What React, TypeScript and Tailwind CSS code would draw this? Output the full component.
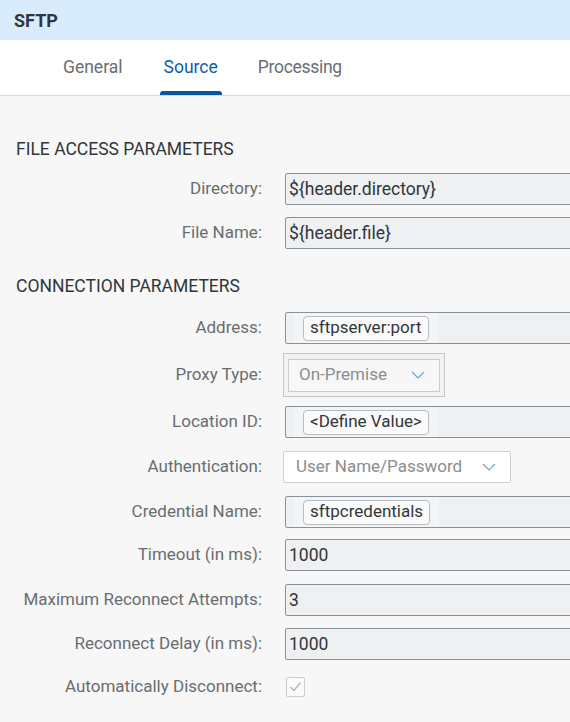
import React from "react";

const font = { fontFamily: "Roboto, 'Liberation Sans', Arial, sans-serif" };

function Chevron() {
  return (
    <svg width="14" height="8" viewBox="0 0 14 8" className="shrink-0">
      <path d="M1 1 L7 7 L13 1" fill="none" stroke="#6a9fd6" strokeWidth="1.1" />
    </svg>
  );
}

function Label({ children }: { children: React.ReactNode }) {
  return <div className="w-[262px] shrink-0 text-right text-[17px] text-[#6a6d70]">{children}</div>;
}

function TextInput({ value }: { value: string }) {
  return (
    <div className="ml-[23px] flex h-[32px] w-[320px] shrink-0 items-center rounded-l-[2px] border border-[#89919a] bg-[#eef0f1] pl-[3px] text-[17.5px] text-[#32363a]">
      {value}
    </div>
  );
}

function TokenInput({ value }: { value: string }) {
  return (
    <div className="ml-[23px] flex h-[32px] w-[320px] shrink-0 items-stretch rounded-l-[2px] border border-[#89919a] bg-[#eef0f1]">
      <div className="ml-[8px] flex items-center bg-[#f3f4f5] px-[9px]">
        <span className="flex h-[25px] items-center rounded-[4px] border border-[#b8bcc0] bg-[#fafafa] px-[6px] text-[17px] text-[#32363a]">
          {value}
        </span>
      </div>
    </div>
  );
}

function Row({ label, children, className }: { label: string; children: React.ReactNode; className?: string }) {
  return (
    <div className={"flex items-center " + (className ?? "")}>
      <Label>{label}</Label>
      {children}
    </div>
  );
}

export default function App() {
  return (
    <div className="h-[722px] w-[570px] overflow-hidden bg-[#f7f7f7]" style={font}>
      {/* Header */}
      <div className="flex h-[40px] items-center bg-[#d9ecfd] pl-[14px] text-[18px] font-bold text-[#32363a]">
        SFTP
      </div>

      {/* Tabs */}
      <div className="flex h-[56px] items-stretch border-b border-[#d9d9d9] bg-white pl-[59px]">
        <div className="flex items-center px-[4px] text-[17.5px] text-[#6a6d70]">General</div>
        <div className="relative ml-[33px] flex items-center px-[4px] text-[17.5px] text-[#0a5eb0]">
          Source
          <div className="absolute bottom-0 left-0 right-0 h-[4px] rounded-t-[3px] bg-[#0854a0]" />
        </div>
        <div className="ml-[32px] flex items-center px-[4px] text-[17.5px] tracking-[-0.3px] text-[#6a6d70]">
          Processing
        </div>
      </div>

      {/* Content */}
      <div className="pt-[41px]">
        <div className="pl-[16px] text-[17.5px] leading-6 text-[#32363a]">FILE ACCESS PARAMETERS</div>
        <Row label="Directory:" className="mt-[12px]">
          <TextInput value="${header.directory}" />
        </Row>
        <Row label="File Name:" className="mt-[12px]">
          <TextInput value="${header.file}" />
        </Row>

        <div className="mt-[25px] pl-[16px] text-[17.5px] leading-6 text-[#32363a]">CONNECTION PARAMETERS</div>
        <Row label="Address:" className="mt-[14px]">
          <TokenInput value="sftpserver:port" />
        </Row>
        <Row label="Proxy Type:" className="mt-[9px]">
          <div className="ml-[21px] flex h-[44px] w-[162px] items-center justify-center border border-[#c4c4c4] bg-[#f2f2f2]">
            <div className="flex h-[33px] w-[152px] items-center justify-between border border-[#cbcbcb] bg-[#f7f7f7] pl-[10px] pr-[14px] text-[17px] text-[#8b8d8f]">
              On-Premise
              <Chevron />
            </div>
          </div>
        </Row>
        <Row label="Location ID:" className="mt-[9px]">
          <TokenInput value="<Define Value>" />
        </Row>
        <Row label="Authentication:" className="mt-[13px]">
          <div className="ml-[21px] flex h-[32px] w-[228px] items-center justify-between rounded-[2px] border border-[#cfcfcf] bg-white pl-[12px] pr-[14px] text-[17px] text-[#8b8d8f]">
            User Name/Password
            <Chevron />
          </div>
        </Row>
        <Row label="Credential Name:" className="mt-[13px]">
          <TokenInput value="sftpcredentials" />
        </Row>
        <Row label="Timeout (in ms):" className="mt-[11px]">
          <TextInput value="1000" />
        </Row>
        <Row label="Maximum Reconnect Attempts:" className="mt-[13px]">
          <TextInput value="3" />
        </Row>
        <Row label="Reconnect Delay (in ms):" className="mt-[12px]">
          <TextInput value="1000" />
        </Row>
        <Row label="Automatically Disconnect:" className="mt-[14px]">
          <div className="ml-[24px] flex h-[20px] w-[19px] items-center justify-center rounded-[2px] border border-[#cdcdcd] bg-[#fafafa]">
            <svg width="13" height="11" viewBox="0 0 13 11">
              <path d="M1.5 6 L5 9.5 L11.5 1.5" fill="none" stroke="#b5b5b5" strokeWidth="1.3" />
            </svg>
          </div>
        </Row>
      </div>
    </div>
  );
}
